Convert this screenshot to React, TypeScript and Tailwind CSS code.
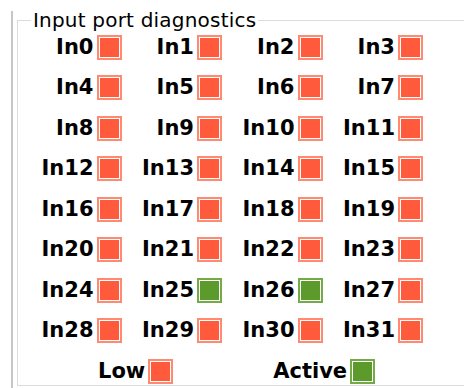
const ACTIVE = new Set([25, 26]);

function Led({ on }: { on: boolean }) {
  return (
    <span
      className={
        on
          ? "inline-block h-[25px] w-[25px] shrink-0 border-2 border-[#74aa48] bg-white p-px"
          : "inline-block h-[25px] w-[25px] shrink-0 border-2 border-[#ff8a72] bg-white p-px"
      }
    >
      <span
        className={on ? "block h-full w-full bg-[#5b9a2b]" : "block h-full w-full bg-[#ff5a3c]"}
      />
    </span>
  );
}

function Port({ label, on }: { label: string; on: boolean }) {
  return (
    <div className="flex items-center justify-end gap-[3px]">
      <span className="whitespace-nowrap font-bold text-[21px] leading-none text-black">{label}</span>
      <Led on={on} />
    </div>
  );
}

export default function App() {
  const ports = Array.from({ length: 32 }, (_, i) => i);

  return (
    <div
      className="h-[388px] w-[464px] overflow-hidden bg-white pl-[11px]"
      style={{ fontFamily: '"DejaVu Sans", sans-serif' }}
    >
      <div className="h-full border-l-2 border-[#c6c6c6] pl-[4px]">
        <fieldset className="mt-[11px] h-[375px] border-y border-l border-[#dcdcdc] pl-[3px]">
          <legend className="ml-[10px] px-[2px] text-[20px] tracking-[0.2px] leading-[18px] text-black">
            Input port diagnostics
          </legend>
          <div className="-mt-[2px] grid w-[402px] grid-cols-4 auto-rows-[40.5px] items-center">
            {ports.map((i) => (
              <Port key={i} label={`In${i}`} on={ACTIVE.has(i)} />
            ))}
          </div>
          <div className="flex h-[40px] items-center">
            <div className="ml-[77px]">
              <Port label="Low" on={false} />
            </div>
            <div className="ml-[100px]">
              <Port label="Active" on={true} />
            </div>
          </div>
        </fieldset>
      </div>
    </div>
  );
}
